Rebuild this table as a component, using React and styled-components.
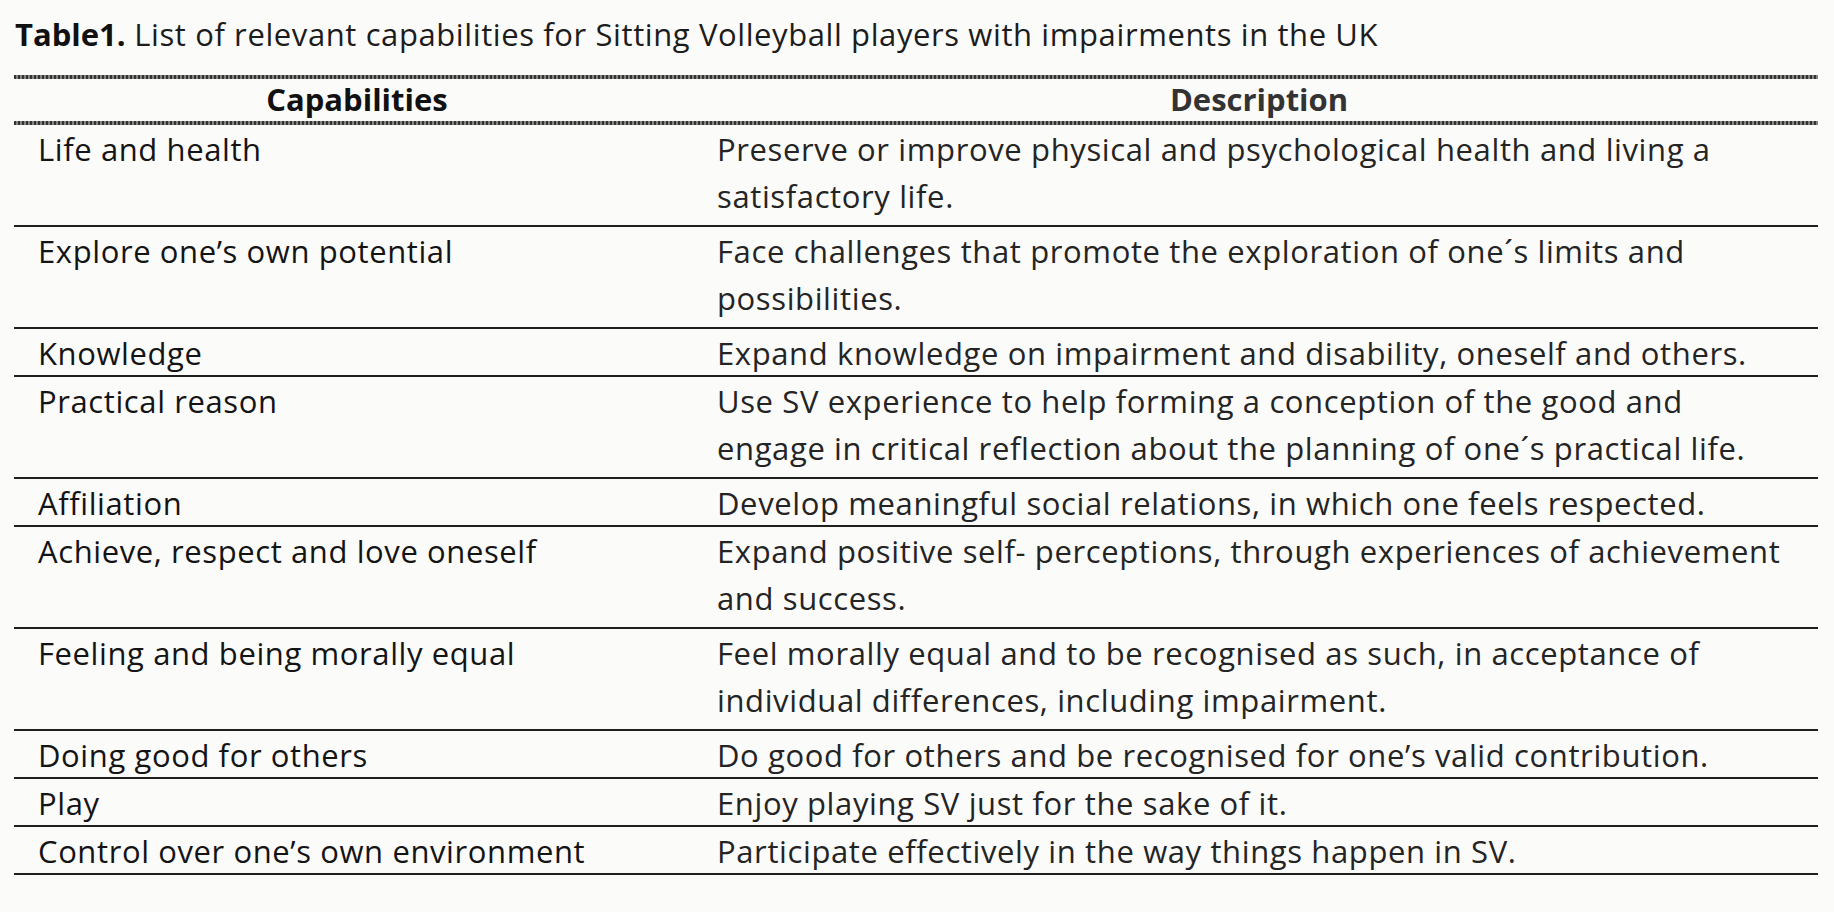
import React from "react";
import styled, { createGlobalStyle } from "styled-components";

const Global = createGlobalStyle`
  html, body {
    margin: 0;
    padding: 0;
    background: #fbfbfa;
  }
  body {
    font-family: "Open Sans", "Noto Sans", sans-serif;
    color: #1a1a1a;
  }
`;

const Page = styled.div`
  width: 1834px;
  height: 912px;
  box-sizing: border-box;
  padding: 14px 16px 0 14px;
  background: #fbfbfa;
  overflow: hidden;
`;

const Caption = styled.div`
  font-size: 31px;
  line-height: 40px;
  letter-spacing: 0.6px;
  padding-left: 1px;
  color: #1c1c1c;
  white-space: nowrap;
  margin-bottom: 21px;
`;

const CaptionLabel = styled.span`
  font-weight: 700;
  letter-spacing: 0;
  color: #111;
`;

const Table = styled.div`
  width: 1804px;
`;

const HalftoneRule = styled.div`
  height: 4px;
  background: repeating-linear-gradient(
    90deg,
    #333 0 2px,
    #858585 2px 4px
  );
`;

const Row = styled.div`
  display: grid;
  grid-template-columns: 686px 1fr;
  box-sizing: border-box;
  height: ${(p) => 48 + (p.$lines - 1) * 54}px;
  border-bottom: 2px solid #1e1e1e;
`;

const HeaderRow = styled.div`
  display: grid;
  grid-template-columns: 686px 1fr;
  height: 42px;
`;

const HeadCell = styled.div`
  font-size: 31px;
  font-weight: 700;
  line-height: 41px;
  text-align: center;
  color: ${(p) => (p.$muted ? "#333" : "#111")};
  white-space: nowrap;
`;

const CapCell = styled.div`
  font-size: 31px;
  line-height: 47px;
  letter-spacing: 0.6px;
  padding: 1px 0 0 24px;
  color: #141414;
  white-space: nowrap;
`;

const DescCell = styled.div`
  font-size: 31px;
  line-height: 47px;
  letter-spacing: 0.62px;
  padding: 1px 0 0 17px;
  color: #242424;
  white-space: nowrap;
`;

const Line = styled.div``;

const rows = [
  {
    cap: "Life and health",
    desc: [
      "Preserve or improve physical and psychological health and living a",
      "satisfactory life.",
    ],
  },
  {
    cap: "Explore one’s own potential",
    desc: [
      "Face challenges that promote the exploration of one´s limits and",
      "possibilities.",
    ],
  },
  {
    cap: "Knowledge",
    desc: ["Expand knowledge on impairment and disability, oneself and others."],
  },
  {
    cap: "Practical reason",
    desc: [
      "Use SV experience to help forming a conception of the good and",
      "engage in critical reflection about the planning of one´s practical life.",
    ],
  },
  {
    cap: "Affiliation",
    desc: ["Develop meaningful social relations, in which one feels respected."],
  },
  {
    cap: "Achieve, respect and love oneself",
    desc: [
      "Expand positive self- perceptions, through experiences of achievement",
      "and success.",
    ],
  },
  {
    cap: "Feeling and being morally equal",
    desc: [
      "Feel morally equal and to be recognised as such, in acceptance of",
      "individual differences, including impairment.",
    ],
  },
  {
    cap: "Doing good for others",
    desc: ["Do good for others and be recognised for one’s valid contribution."],
  },
  {
    cap: "Play",
    desc: ["Enjoy playing SV just for the sake of it."],
  },
  {
    cap: "Control over one’s own environment",
    desc: ["Participate effectively in the way things happen in SV."],
  },
];

export default function App() {
  return (
    <>
      <Global />
      <Page>
        <Caption>
          <CaptionLabel>Table1.</CaptionLabel> List of relevant capabilities for
          Sitting Volleyball players with impairments in the UK
        </Caption>
        <Table>
          <HalftoneRule />
          <HeaderRow>
            <HeadCell>Capabilities</HeadCell>
            <HeadCell $muted>Description</HeadCell>
          </HeaderRow>
          <HalftoneRule />
          {rows.map((r) => (
            <Row key={r.cap} $lines={r.desc.length}>
              <CapCell>{r.cap}</CapCell>
              <DescCell>
                {r.desc.map((l) => (
                  <Line key={l}>{l}</Line>
                ))}
              </DescCell>
            </Row>
          ))}
        </Table>
      </Page>
    </>
  );
}
